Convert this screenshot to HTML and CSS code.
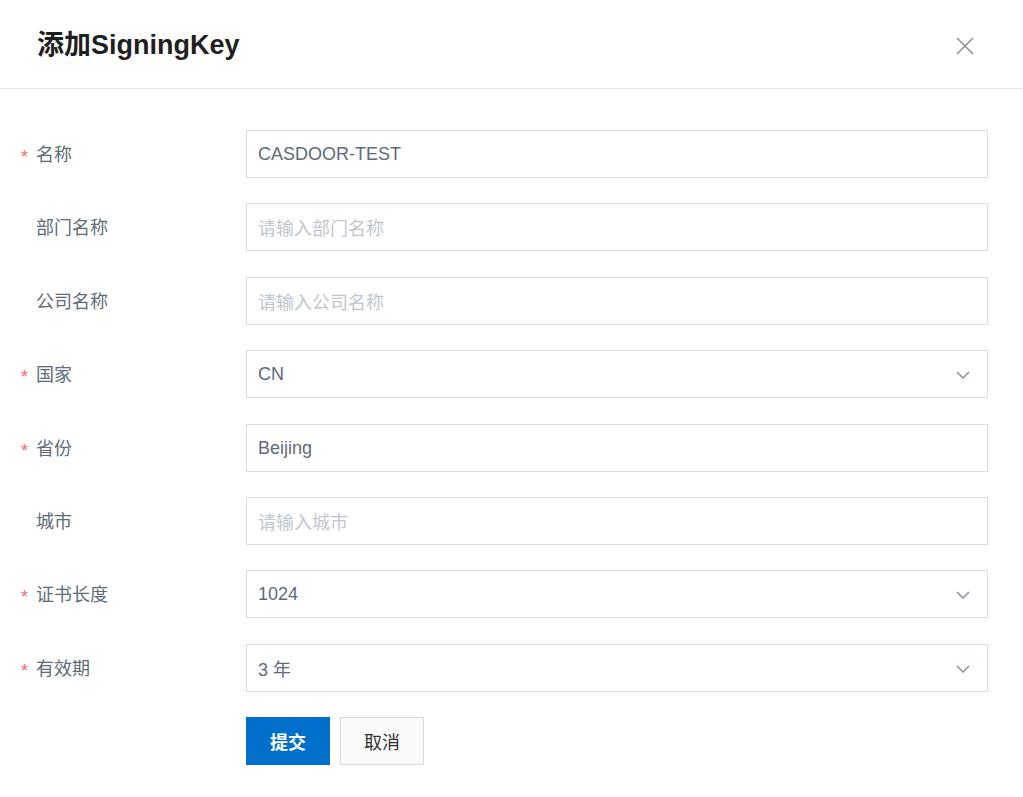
FILE: index.html
```html
<!DOCTYPE html>
<html lang="zh-CN">
<head>
<meta charset="utf-8">
<link rel="stylesheet" href="styles.css">
</head>
<body>
<div class="dialog">
  <div class="header">
    <div class="title">添加SigningKey</div>
    <svg class="close" width="18" height="18" viewBox="0 0 18 18"><path d="M1 1L17 17M17 1L1 17" stroke="#8c8c8c" stroke-width="1.5" fill="none"/></svg>
  </div>
  <div class="form">
    <div class="row">
      <div class="label"><span class="star">*</span>名称</div>
      <div class="input"><span class="val">CASDOOR-TEST</span></div>
    </div>
    <div class="row">
      <div class="label"><span class="star"></span>部门名称</div>
      <div class="input"><span class="ph">请输入部门名称</span></div>
    </div>
    <div class="row">
      <div class="label"><span class="star"></span>公司名称</div>
      <div class="input"><span class="ph">请输入公司名称</span></div>
    </div>
    <div class="row">
      <div class="label"><span class="star">*</span>国家</div>
      <div class="input select"><span class="val">CN</span><svg class="chev" width="14" height="8" viewBox="0 0 14 8"><path d="M1 1L7 7L13 1" stroke="#8a94a3" stroke-width="1.6" fill="none"/></svg></div>
    </div>
    <div class="row">
      <div class="label"><span class="star">*</span>省份</div>
      <div class="input"><span class="val">Beijing</span></div>
    </div>
    <div class="row">
      <div class="label"><span class="star"></span>城市</div>
      <div class="input"><span class="ph">请输入城市</span></div>
    </div>
    <div class="row">
      <div class="label"><span class="star">*</span>证书长度</div>
      <div class="input select"><span class="val">1024</span><svg class="chev" width="14" height="8" viewBox="0 0 14 8"><path d="M1 1L7 7L13 1" stroke="#8a94a3" stroke-width="1.6" fill="none"/></svg></div>
    </div>
    <div class="row">
      <div class="label"><span class="star">*</span>有效期</div>
      <div class="input select"><span class="val">3 年</span><svg class="chev" width="14" height="8" viewBox="0 0 14 8"><path d="M1 1L7 7L13 1" stroke="#8a94a3" stroke-width="1.6" fill="none"/></svg></div>
    </div>
    <div class="actions">
      <button class="btn primary">提交</button>
      <button class="btn">取消</button>
    </div>
  </div>
</div>
</body>
</html>
```

FILE: styles.css
```css
html, body {
  margin: 0;
  padding: 0;
  background: #fff;
  font-family: "Liberation Sans", Arial, "Noto Sans CJK SC", sans-serif;
}
.dialog {
  width: 1023px;
  height: 797px;
  background: #fff;
}
.header {
  height: 89px;
  border-bottom: 1px solid #e6e8eb;
  display: flex;
  align-items: center;
  justify-content: space-between;
  padding: 0 49px 0 37px;
  box-sizing: border-box;
}
.title {
  font-size: 27px;
  font-weight: bold;
  color: #1f1f1f;
  margin-top: -3px;
}
.close {
  margin-top: 3px;
}
.form {
  padding: 41px 35px 0 21px;
}
.row {
  display: flex;
  align-items: center;
  height: 48px;
  margin-bottom: 25.4px;
}
.label {
  width: 225px;
  flex: none;
  font-size: 18px;
  color: #606a78;
  display: flex;
  align-items: center;
  margin-top: -2px;
}
.star {
  width: 15px;
  color: #f56c6c;
  font-size: 18px;
  display: inline-block;
  padding-top: 8px;
  line-height: 1;
}
.input {
  flex: 1;
  height: 48px;
  box-sizing: border-box;
  border: 1px solid #d7dce5;
  padding: 0 11px;
  display: flex;
  align-items: center;
  justify-content: space-between;
  font-size: 18px;
}
.val {
  color: #606a78;
  padding-top: 1px;
}
.ph {
  color: #c0c6d0;
}
.chev {
  margin-right: 6px;
  margin-top: 2px;
}
.actions {
  display: flex;
  gap: 10px;
  padding-left: 225px;
  margin-top: 0;
}
.btn {
  width: 84px;
  height: 48px;
  border: 1px solid #d9d9d9;
  background: #fafafa;
  color: #333;
  font-size: 18px;
  font-family: "Liberation Sans", Arial, "Noto Sans CJK SC", sans-serif;
  padding: 0;
}
.btn.primary {
  background: #0070cc;
  border-color: #0070cc;
  color: #fff;
  font-weight: bold;
}
```
